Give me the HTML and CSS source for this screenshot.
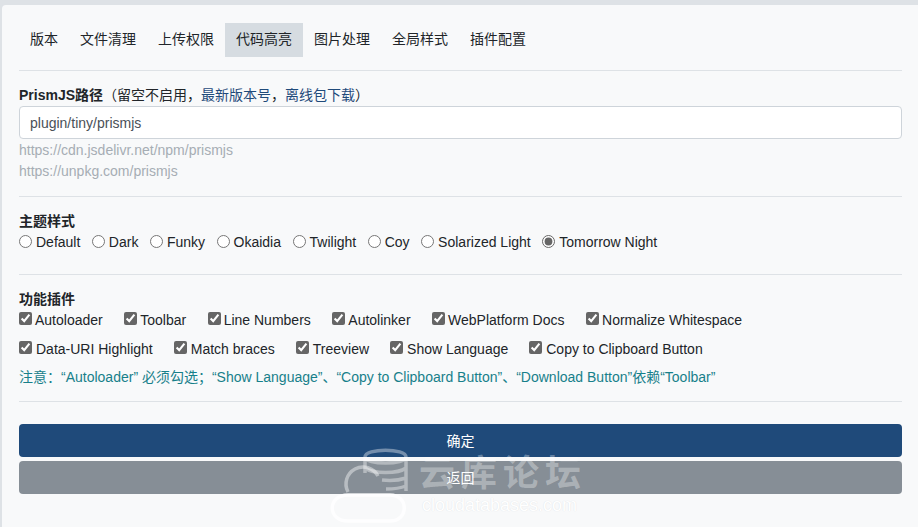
FILE: index.html
```html
<!DOCTYPE html>
<html>
<head>
  <title>代码高亮</title>
  <link rel="stylesheet" href="styles.css">
</head>
<body>
  <div class="card">
    <ul class="tabs">
      <li>版本</li>
      <li>文件清理</li>
      <li>上传权限</li>
      <li class="active">代码高亮</li>
      <li>图片处理</li>
      <li>全局样式</li>
      <li>插件配置</li>
    </ul>
    <hr class="line line-tabs">

    <div class="field-path">
      <label class="path-label"><b>PrismJS路径</b>（留空不启用，<a href="#">最新版本号</a>，<a href="#">离线包下载</a>）</label>
      <input class="path-input" type="text" value="plugin/tiny/prismjs">
      <div class="hint">https://cdn.jsdelivr.net/npm/prismjs</div>
      <div class="hint">https://unpkg.com/prismjs</div>
    </div>
    <hr class="line line-path">

    <div class="field-theme">
      <div class="title">主题样式</div>
      <div class="options radios">
        <label><input type="radio" name="theme">Default</label>
        <label><input type="radio" name="theme">Dark</label>
        <label><input type="radio" name="theme">Funky</label>
        <label><input type="radio" name="theme">Okaidia</label>
        <label><input type="radio" name="theme">Twilight</label>
        <label><input type="radio" name="theme">Coy</label>
        <label><input type="radio" name="theme">Solarized Light</label>
        <label><input type="radio" name="theme" checked>Tomorrow Night</label>
      </div>
    </div>
    <hr class="line line-theme">

    <div class="field-plugins">
      <div class="title">功能插件</div>
      <div class="options checks checks-first">
        <label><input type="checkbox" checked>Autoloader</label>
        <label><input type="checkbox" checked>Toolbar</label>
        <label><input type="checkbox" checked>Line Numbers</label>
        <label><input type="checkbox" checked>Autolinker</label>
        <label><input type="checkbox" checked>WebPlatform Docs</label>
        <label><input type="checkbox" checked>Normalize Whitespace</label>
      </div>
      <div class="options checks">
        <label><input type="checkbox" checked>Data-URI Highlight</label>
        <label><input type="checkbox" checked>Match braces</label>
        <label><input type="checkbox" checked>Treeview</label>
        <label><input type="checkbox" checked>Show Language</label>
        <label><input type="checkbox" checked>Copy to Clipboard Button</label>
      </div>
      <div class="note">注意：“Autoloader” 必须勾选；“Show Language”、“Copy to Clipboard Button”、“Download Button”依赖“Toolbar”</div>
    </div>
    <hr class="line line-plugins">

    <button class="btn btn-ok"><span class="btn-text">确定</span></button>
    <button class="btn btn-back"><span class="btn-text">返回</span></button>
  </div>

  <!-- forum watermark stamped over the screenshot -->
  <div class="watermark">
    <svg class="wm-icon" width="80" height="76" viewBox="0 0 80 76" fill="none">
      <path d="M35 9c0-9 41-9 41 0v34M35 9v16M35 9c0 8 41 8 41 0M35 20c8 6 33 6 41 0M52 32c9 1 18 0 24-2M56 41c8 0 15-1 20-3" stroke="#fff" stroke-opacity=".38" stroke-width="3.5"/>
      <path d="M18 44a17 17 0 0 1 30-16" stroke="#fff" stroke-opacity=".42" stroke-width="3.5"/>
      <path d="M18 47h42c19 0 19 26 0 26H18C-3 73-3 47 18 47z" stroke="#fff" stroke-opacity=".85" stroke-width="3.5"/>
    </svg>
    <div class="wm-name">云库论坛</div>
    <div class="wm-url">cloudatabases.com</div>
  </div>
</body>
</html>
```

FILE: styles.css
```css
body {
  margin: 0;
  height: 527px;
  overflow: hidden;
  background-color: #dee2e6;
  font-family: "Liberation Sans", "Noto Sans CJK SC", sans-serif;
  font-size: 14px;
  color: #212529;
}

.card {
  margin: 5px 0 0 2px;
  padding: 18px 16px 0 17px;
  height: 522px;
  box-sizing: border-box;
  background-color: #f8f9fa;
  border-radius: 4px 0 0 0;
}

.tabs {
  display: flex;
  list-style: none;
  margin: 0;
  padding: 0;
}

.tabs li {
  padding: 0 11px 1px;
  line-height: 33px;
}

.tabs .active {
  background-color: #d6dce1;
}

.line {
  border: none;
  border-top: 1px solid #dee2e6;
  margin: 0;
}

.line-tabs {
  margin-top: 13px;
}

.field-path {
  margin-top: 14px;
}

.path-label {
  display: block;
  line-height: 20px;
}

.path-label a {
  color: #1f4a7a;
  text-decoration: none;
}

.path-input {
  display: block;
  width: 100%;
  height: 33px;
  box-sizing: border-box;
  margin-top: 1px;
  padding: 0 10px;
  border: 1px solid #ced4da;
  border-radius: 4px;
  background-color: #fff;
  color: #495057;
  font: inherit;
}

.hint {
  color: #a6adb4;
  line-height: 21px;
}

.path-input + .hint {
  margin-top: 1px;
}

.line-path {
  margin-top: 14px;
}

.title {
  font-weight: bold;
  line-height: 20px;
}

.field-theme {
  margin-top: 14px;
}

.options {
  display: flex;
  align-items: center;
  line-height: 20px;
}

.options label {
  display: flex;
  align-items: center;
}

.options input {
  margin: 0 4px 0 0;
  accent-color: #666;
}

.radios {
  gap: 11.5px;
  margin-top: 1px;
}

.radios input {
  position: relative;
  top: -1px;
}

.checks {
  gap: 21px;
  height: 21px;
  margin-bottom: 8px;
}

.checks-first {
  gap: 21.5px;
}

.checks-first input {
  margin-right: 3px;
}

.checks input {
  position: relative;
  top: -1px;
}

.line-theme {
  margin-top: 22px;
}

.field-plugins {
  margin-top: 14px;
}

.note {
  color: #17808a;
  line-height: 20px;
}

.line-plugins {
  margin-top: 14px;
}

.btn {
  display: block;
  width: 100%;
  height: 33px;
  border: none;
  border-radius: 4px;
  color: #fff;
  font: inherit;
}

.btn-text {
  position: relative;
  top: -1px;
}

.btn-ok {
  margin-top: 22px;
  background-color: #1f4a7a;
}

.btn-back {
  margin-top: 4px;
  background-color: #868e96;
}

.watermark {
  position: absolute;
  left: 330px;
  top: 448px;
  width: 260px;
  height: 76px;
}

.wm-icon {
  position: absolute;
  left: 0;
  top: 0;
}

.wm-name {
  position: absolute;
  left: 89px;
  top: 2px;
  color: rgba(255, 255, 255, 0.32);
  font-family: "Noto Sans CJK SC", sans-serif;
  font-size: 36px;
  font-weight: bold;
  line-height: 40px;
  letter-spacing: 6px;
  white-space: nowrap;
}

.wm-url {
  position: absolute;
  left: 92px;
  top: 46px;
  color: #fff;
  font-size: 18px;
  line-height: 22px;
  white-space: nowrap;
  text-shadow: 0 0 1px #d8dbde;
}
```
